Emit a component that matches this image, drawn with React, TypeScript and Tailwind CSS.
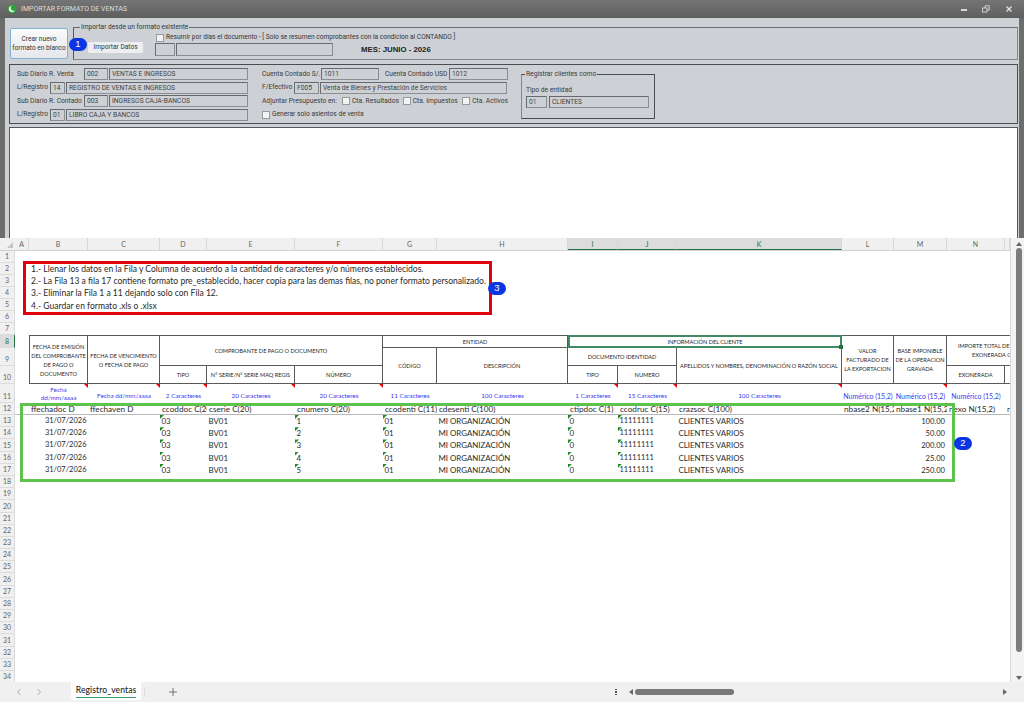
const COLS =
  "grid grid-cols-[14px_59px_72px_47px_88px_88px_54px_131px_50px_59px_165px_52px_53px_58px_5px]";
const CELL = "border-r border-b border-[#5a5a5a] flex items-center justify-center text-center px-px";

const ROWS: { n: number; h: string; on?: boolean }[] = [
  { n: 1, h: "h-[12px]" },
  { n: 2, h: "h-[12px]" },
  { n: 3, h: "h-[12px]" },
  { n: 4, h: "h-[12px]" },
  { n: 5, h: "h-[12px]" },
  { n: 6, h: "h-[12px]" },
  { n: 7, h: "h-[12px]" },
  { n: 8, h: "h-[12.5px]", on: true },
  { n: 9, h: "h-[18px]" },
  { n: 10, h: "h-[18.5px]" },
  { n: 11, h: "h-[19px]" },
  { n: 12, h: "h-[12px]" },
  ...Array.from({ length: 22 }, (_, i) => ({ n: 13 + i, h: "h-[12.2px]" })),
];

const LETTERS = [
  { l: "A", w: "w-[14px]" },
  { l: "B", w: "w-[59px]" },
  { l: "C", w: "w-[72px]" },
  { l: "D", w: "w-[47px]" },
  { l: "E", w: "w-[88px]" },
  { l: "F", w: "w-[88px]" },
  { l: "G", w: "w-[54px]" },
  { l: "H", w: "w-[131px]" },
  { l: "I", w: "w-[50px]", on: true },
  { l: "J", w: "w-[59px]", on: true },
  { l: "K", w: "w-[165px]", on: true },
  { l: "L", w: "w-[52px]" },
  { l: "M", w: "w-[53px]" },
  { l: "N", w: "w-[58px]" },
  { l: "", w: "w-[5px]" },
];

const INSTRUCTIONS = [
  "1.- Llenar los datos en la Fila y Columna de acuerdo a la cantidad de caracteres y/o números establecidos.",
  "2.- La Fila 13 a fila 17 contiene formato pre_establecido, hacer copia para las demas filas, no poner formato personalizado.",
  "3.- Eliminar la Fila 1 a 11 dejando solo con Fila 12.",
  "4.- Guardar en formato .xls o .xlsx",
];

const LIMITS = [
  { t: "Fecha dd/mm/aaaa", mark: true },
  { t: "Fecha dd/mm/aaaa", mark: true },
  { t: "2 Caracteres", mark: true },
  { t: "20 Caracteres", mark: true },
  { t: "20 Caracteres", mark: true },
  { t: "11 Caracteres" },
  { t: "100 Caracteres" },
  { t: "1 Caracteres", mark: true },
  { t: "15 Caracteres", mark: true },
  { t: "100 Caracteres", mark: true },
  { t: "Numérico (15,2)" },
  { t: "Numérico (15,2)", mark: true },
  { t: "Numérico (15,2)" },
];

const FIELDS = [
  "ffechadoc D",
  "ffechaven D",
  "ccoddoc C(20)",
  "cserie C(20)",
  "cnumero C(20)",
  "ccodenti C(11)",
  "cdesenti C(100)",
  "ctipdoc C(1)",
  "ccodruc C(15)",
  "crazsoc C(100)",
  "nbase2 N(15,2)",
  "nbase1 N(15,2)",
  "nexo N(15,2)",
  "n",
];

const DATA = [
  { num: "1", total: "100.00" },
  { num: "2", total: "50.00" },
  { num: "3", total: "200.00" },
  { num: "4", total: "25.00" },
  { num: "5", total: "250.00" },
];

function Field({ text, className }: { text?: string; className: string }) {
  return (
    <div
      className={`h-[12px] shrink-0 border border-[#666a6e] border-r-[#8a8e92] border-b-[#8a8e92] pl-[2px] text-[6.7px] leading-[10px] text-[#444] whitespace-nowrap overflow-hidden ${className}`}
    >
      {text}
    </div>
  );
}

function Check({ label, className = "" }: { label: string; className?: string }) {
  return (
    <div className={`flex items-center gap-[2px] ${className}`}>
      <div className="w-[8px] h-[8px] bg-[#f2f3f4] border border-[#9a9a9a] shrink-0" />
      <span className="whitespace-nowrap">{label}</span>
    </div>
  );
}

function Badge({ n, className }: { n: number; className: string }) {
  return (
    <div
      className={`absolute w-[18px] h-[12.5px] rounded-full bg-[#0a35e2] text-white text-[9.5px] leading-[12.5px] text-center font-['Liberation_Sans',sans-serif] ${className}`}
    >
      {n}
    </div>
  );
}

function Flag() {
  return <div className="absolute top-0 right-0 w-[4px] h-[4px] bg-[#e8000b] [clip-path:polygon(0_0,100%_0,100%_100%)]" />;
}

function Tick() {
  return <div className="absolute top-0 left-0 w-[4px] h-[4px] bg-[#1c8a2c] [clip-path:polygon(0_0,100%_0,0_100%)]" />;
}

function TitleBar() {
  return (
    <div className="h-[18px] shrink-0 flex items-center bg-gradient-to-b from-[#757575] to-[#5f5f5f] pl-[7px] pr-[11px]">
      <svg width="10" height="10" viewBox="0 0 10 10" className="shrink-0">
        <circle cx="5" cy="5" r="4.6" fill="#2f9e3f" />
        <path d="M5 1.8a3.2 3.2 0 1 0 3 4.4 2.6 2.6 0 0 1-3-4.4z" fill="#e8f0e8" />
      </svg>
      <span className="ml-[4px] text-[7px] text-[#dcdcdc]">IMPORTAR FORMATO DE VENTAS</span>
      <div className="ml-auto flex items-center gap-[15px] text-[#d8d8d8]">
        <div className="w-[6px] h-[1.5px] bg-[#d8d8d8] mt-[2px]" />
        <svg width="8" height="8" viewBox="0 0 8 8" fill="none" stroke="#cfcfcf" strokeWidth="1">
          <rect x="0.5" y="3" width="4.5" height="4" />
          <path d="M3 3V0.8h4.3V5H5" />
        </svg>
        <svg width="8" height="8" viewBox="0 0 8 8" fill="none" stroke="#e0e0e0" strokeWidth="1.4">
          <path d="M1.5 1.5l5 5M6.5 1.5l-5 5" />
        </svg>
      </div>
    </div>
  );
}

function ImportPanel() {
  return (
    <div className="flex pl-[5px] pt-[4px] h-[42px] text-[6.6px] text-[#333]">
      <div className="mt-[6px] w-[58px] h-[31px] shrink-0 rounded-[2px] border border-[#7fb2d6] bg-gradient-to-b from-[#fbfbfb] to-[#e4e6ea] flex items-center justify-center text-center leading-[8.5px] whitespace-nowrap">
        <span>
          Crear nuevo
          <br />
          formato en blanco
        </span>
      </div>
      <fieldset className="ml-[5px] w-[945px] h-[38px] border border-[#55585b] border-t-[#6a6d70] border-b-[#85888b] border-r-[#85888b]">
        <legend className="ml-[6px] leading-[10px] px-px">Importar desde un formato existente</legend>
        <div className="flex items-start pl-[14px]">
          <div className="mt-[10px] w-[55px] h-[11px] bg-[#eceef1] rounded-[1px] text-center leading-[11px]">
            Importar Datos
          </div>
          <div className="ml-[12px] flex flex-col">
            <Check
              className="ml-px leading-[9px] mt-px"
              label="Resumir por días el documento - [ Solo se resumen comprobantes con la condicion al CONTANDO ]"
            />
            <div className="flex items-center mt-px">
              <Field className="w-[20px] !h-[13px]" />
              <Field className="ml-px w-[157px] !h-[13px]" />
              <span className="ml-[28px] text-[7.8px] font-bold text-[#222] font-['Liberation_Sans',sans-serif]">
                MES: JUNIO - 2026
              </span>
            </div>
          </div>
        </div>
      </fieldset>
    </div>
  );
}

function DiaryRow({ label, labelW, code, codeW, name }: { label: string; labelW: string; code: string; codeW: string; name: string }) {
  return (
    <div className="flex items-center gap-px">
      <span className={`shrink-0 whitespace-nowrap ${labelW}`}>{label}</span>
      <Field className={codeW} text={code} />
      <Field className="flex-1" text={name} />
    </div>
  );
}

function ConfigPanel() {
  return (
    <div className="mt-[4px] h-[60px] border border-[#4a4d50] flex text-[6.7px] text-[#3a3a3a]">
      <div className="ml-[7px] mt-[3px] w-[231px] flex flex-col gap-[1.5px]">
        <DiaryRow label="Sub Diario R. Venta" labelW="w-[66px]" code="002" codeW="w-[24px]" name="VENTAS E INGRESOS" />
        <DiaryRow label="L/Registro" labelW="w-[32px]" code="14" codeW="w-[15px]" name="REGISTRO DE VENTAS E INGRESOS" />
        <DiaryRow label="Sub Diario R. Contado" labelW="w-[66px]" code="003" codeW="w-[24px]" name="INGRESOS CAJA-BANCOS" />
        <DiaryRow label="L/Registro" labelW="w-[32px]" code="01" codeW="w-[15px]" name="LIBRO CAJA Y BANCOS" />
      </div>
      <div className="ml-[14px] mt-[3px] w-[246px] flex flex-col gap-[1.5px]">
        <div className="flex items-center">
          <span className="w-[59px] shrink-0 whitespace-nowrap">Cuenta Contado S/.</span>
          <Field className="w-[58px]" text="1011" />
          <span className="ml-[6px] w-[64px] shrink-0 whitespace-nowrap">Cuenta Contado USD</span>
          <Field className="w-[59px]" text="1012" />
        </div>
        <div className="flex items-center">
          <span className="w-[32px] shrink-0">F/Efectivo</span>
          <Field className="w-[25px]" text="F005" />
          <Field className="ml-px w-[187px]" text="Venta de Bienes y Prestación de Servicios" />
        </div>
        <div className="flex items-center h-[12px]">
          <span className="w-[80px] shrink-0 whitespace-nowrap">Adjuntar Presupuesto en:</span>
          <Check className="w-[61px]" label="Cta. Resultados" />
          <Check className="w-[60px]" label="Cta. Impuestos" />
          <Check label="Cta. Activos" />
        </div>
        <Check className="h-[12px]" label="Generar solo asientos de venta" />
      </div>
      <fieldset className="ml-[13px] mt-[4.5px] w-[134px] h-[49px] border border-[#4a4d50] border-l-[#85888b]">
        <legend className="ml-[3px] px-px leading-[9px]">Registrar clientes como</legend>
        <div className="pl-[4px]">
          <div className="mt-[7px] leading-[9px]">Tipo de entidad</div>
          <div className="mt-[1.5px] flex gap-[2px]">
            <Field className="w-[21px]" text="01" />
            <Field className="w-[100px]" text="CLIENTES" />
          </div>
        </div>
      </fieldset>
    </div>
  );
}

function HeaderTable() {
  return (
    <div className={`${COLS} grid-rows-[12.5px_18px_18.5px] text-[5.6px] leading-[9px] text-[#262626]`}>
      <div className={`${CELL} col-start-2 row-span-3 border-t border-l`}>
        FECHA DE EMISIÓN DEL COMPROBANTE DE PAGO O DOCUMENTO
      </div>
      <div className={`${CELL} col-start-3 row-span-3 border-t`}>FECHA DE VENCIMIENTO O FECHA DE PAGO</div>
      <div className={`${CELL} col-start-4 col-span-3 row-span-2 border-t`}>COMPROBANTE DE PAGO O DOCUMENTO</div>
      <div className={`${CELL} col-start-7 col-span-2 border-t`}>ENTIDAD</div>
      <div className="col-start-9 col-span-3 relative border-2 border-[#3f8a63] flex items-center justify-center">
        INFORMACIÓN DEL CLIENTE
        <div className="absolute -right-[3px] -bottom-[3px] w-[4px] h-[4px] bg-[#217346]" />
      </div>
      <div className={`${CELL} col-start-12 row-span-3 border-t`}>VALOR FACTURADO DE LA EXPORTACION</div>
      <div className={`${CELL} col-start-13 row-span-3 border-t`}>BASE IMPONIBLE DE LA OPERACION GRAVADA</div>
      <div className={`${CELL} col-start-14 col-span-2 row-span-2 border-t !border-r-0 overflow-hidden whitespace-nowrap !justify-start !text-left`}>
        <span className="pl-[10px]">
          IMPORTE TOTAL DE
          <br />
          <span className="pl-[14px]">EXONERADA O</span>
        </span>
      </div>
      <div className={`${CELL} col-start-7 row-span-2`}>CÓDIGO</div>
      <div className={`${CELL} col-start-8 row-span-2`}>DESCRIPCIÓN</div>
      <div className={`${CELL} col-start-9 col-span-2`}>DOCUMENTO IDENTIDAD</div>
      <div className={`${CELL} col-start-11 row-span-2`}>APELLIDOS Y NOMBRES, DENOMINACIÓN O RAZÓN SOCIAL</div>
      <div className={`${CELL} col-start-4`}>TIPO</div>
      <div className={`${CELL} col-start-5 whitespace-nowrap`}>N° SERIE/N° SERIE MAQ REGIS</div>
      <div className={`${CELL} col-start-6`}>NÚMERO</div>
      <div className={`${CELL} col-start-9`}>TIPO</div>
      <div className={`${CELL} col-start-10`}>NUMERO</div>
      <div className={`${CELL} col-start-14`}>EXONERADA</div>
      <div className="border-b border-[#5a5a5a] col-start-15" />
    </div>
  );
}

function Sheet() {
  return (
    <div className="relative flex-1 flex flex-col bg-white min-h-0 font-['Lato',sans-serif]">
      {/* column letters */}
      <div className="h-[13px] shrink-0 flex bg-[#f0f0f0] border-b border-[#d0d0d0] text-[7px] leading-[12px] text-[#666]">
        <div className="w-[15px] shrink-0 flex items-end justify-end pr-[2px] pb-[2px]">
          <div className="w-[6px] h-[6px] bg-[#c4c4c4] [clip-path:polygon(100%_0,100%_100%,0_100%)]" />
        </div>
        {LETTERS.map((c, i) => (
          <div
            key={i}
            className={`${c.w} shrink-0 text-center border-r border-[#d8d8d8] ${c.on ? "bg-[#dcdcdc] text-[#217346] border-b border-b-[#217346]" : ""}`}
          >
            {c.l}
          </div>
        ))}
      </div>

      <div className="flex flex-1 min-h-0">
        {/* row numbers */}
        <div className="w-[15px] shrink-0 flex flex-col bg-[#f0f0f0] text-[7px] leading-[11px] text-[#666] overflow-hidden">
          {ROWS.map((r) => (
            <div
              key={r.n}
              className={`${r.h} shrink-0 flex items-end justify-center border-b border-r border-[#dcdcdc] ${r.on ? "bg-[#dcdcdc] text-[#217346] border-r-[#217346]" : ""}`}
            >
              {r.n}
            </div>
          ))}
        </div>

        <div className="w-[995px] shrink-0 overflow-hidden">
          <div className="h-[84px] pt-[12px] pl-[16px] text-[8.55px] leading-[12.2px] text-[#2a2a2a]">
            {INSTRUCTIONS.map((t) => (
              <div key={t} className="whitespace-nowrap">
                {t}
              </div>
            ))}
          </div>

          <HeaderTable />

          {/* limits row */}
          <div className={`${COLS} h-[19px] text-[6.4px] leading-[8px] text-[#3b3bf0]`}>
            <div />
            {LIMITS.map((c, i) => (
              <div key={i} className="relative flex items-end justify-center text-center pb-px">
                {i === 0 ? (
                  <span className="px-[10px]">{c.t}</span>
                ) : (
                  <span className={`whitespace-nowrap pb-[2px] ${c.t.startsWith("Num") ? "text-[7px]" : ""}`}>{c.t}</span>
                )}
                {c.mark ? <Flag /> : null}
              </div>
            ))}
          </div>

          {/* field names */}
          <div className={`${COLS} h-[12px] border-b border-[#b8b8b8] text-[8.2px] leading-[12px] text-[#2a2a2a]`}>
            <div />
            {FIELDS.map((t, i) => (
              <div key={i} className="pl-[2px] whitespace-nowrap overflow-hidden">
                {t}
              </div>
            ))}
          </div>

          {DATA.map((d) => (
            <div key={d.num} className={`${COLS} h-[12.2px] text-[7.9px] leading-[12.2px] text-[#2a2a2a]`}>
              <div />
              <div className="text-right pr-[1.5px] text-[7.5px]">31/07/2026</div>
              <div />
              <div className="relative pl-[1.5px]">
                <Tick />
                03
              </div>
              <div className="pl-[1.5px]">BV01</div>
              <div className="relative pl-[1.5px]">
                <Tick />
                {d.num}
              </div>
              <div className="relative pl-[1.5px]">
                <Tick />
                01
              </div>
              <div className="pl-[1.5px] whitespace-nowrap">MI ORGANIZACIÓN</div>
              <div className="relative pl-[1.5px]">
                <Tick />0
              </div>
              <div className="relative pl-[1.5px] text-[7.4px]">
                <Tick />
                11111111
              </div>
              <div className="pl-[1.5px] whitespace-nowrap">CLIENTES VARIOS</div>
              <div />
              <div className="text-right pr-[2px] text-[7.6px]">{d.total}</div>
            </div>
          ))}
        </div>

        {/* vertical scrollbar */}
        <div className="w-[14px] shrink-0 bg-[#f3f3f3] border-l border-[#d8d8d8] flex flex-col items-center relative -mt-[13px]">
          <svg width="6" height="4" viewBox="0 0 6 4" className="mt-[4px] ml-[3px]">
            <polygon points="3,0 6,4 0,4" fill="#666" />
          </svg>
          <div className="mt-[2px] ml-[3px] w-[6px] h-[404px] rounded-full bg-[#7d7d7d]" />
          <svg width="6" height="4" viewBox="0 0 6 4" className="mt-[24px] ml-[3px]">
            <polygon points="0,0 6,0 3,4" fill="#666" />
          </svg>
        </div>
      </div>

      {/* sheet tabs */}
      <div className="h-[20px] shrink-0 flex items-center bg-[#f0f0f0] text-[#999]">
        <svg width="6" height="8" viewBox="0 0 6 8" fill="none" stroke="#aaa" className="ml-[16px]">
          <path d="M4.5 1L1.5 4l3 3" />
        </svg>
        <svg width="6" height="8" viewBox="0 0 6 8" fill="none" stroke="#aaa" className="ml-[14px]">
          <path d="M1.5 1l3 3-3 3" />
        </svg>
        <div className="ml-[29px] w-[70px] h-[18px] self-start bg-white rounded-b-[3px] flex flex-col items-center justify-center">
          <span className="text-[8.5px] leading-[12px] font-medium text-[#222] tracking-[0.1px]">Registro_ventas</span>
          <div className="w-[60px] h-[1.5px] bg-[#3e9a6b] mt-[1px]" />
        </div>
        <div className="ml-[3px] w-px h-[10px] bg-[#dcdcdc]" />
        <svg width="8" height="8" viewBox="0 0 8 8" stroke="#777" className="ml-[24px]">
          <path d="M4 0v8M0 4h8" />
        </svg>
        <div className="ml-[438px] flex flex-col gap-px">
          <div className="w-[1.5px] h-[1.5px] bg-[#555]" />
          <div className="w-[1.5px] h-[1.5px] bg-[#555]" />
          <div className="w-[1.5px] h-[1.5px] bg-[#555]" />
        </div>
        <svg width="4" height="6" viewBox="0 0 4 6" className="ml-[12px]">
          <polygon points="4,0 4,6 0,3" fill="#666" />
        </svg>
        <div className="ml-[2px] w-[99px] h-[6px] rounded-full bg-[#787878]" />
        <svg width="4" height="6" viewBox="0 0 4 6" className="ml-[269px]">
          <polygon points="0,0 4,3 0,6" fill="#666" />
        </svg>
      </div>

      {/* annotations over the sheet */}
      <div className="absolute left-[23px] top-[23px] w-[469px] h-[54px] border-[3px] border-[#e6000e] pointer-events-none" />
      <div className="absolute left-[20px] top-[165px] w-[935px] h-[79px] border-[3px] border-[#5ec34c] pointer-events-none" />
      <Badge n={3} className="left-[488px] top-[44px]" />
      <Badge n={2} className="left-[954px] top-[199px]" />
    </div>
  );
}

export default function App() {
  return (
    <div className="relative w-[1024px] h-[702px] overflow-hidden flex flex-col bg-[#6d6d6d] font-['Roboto',sans-serif]">
      <TitleBar />
      <div className="shrink-0 mx-[5px] w-[1014px] h-[220px] bg-[#cdd1d6] pl-[4px] pr-px">
        <div className="-ml-[4px]">
          <ImportPanel />
        </div>
        <ConfigPanel />
        <div className="mt-[3px] h-[111px] bg-white border border-b-0 border-[#55585b]" />
      </div>
      <Sheet />
      <Badge n={1} className="left-[69px] top-[38px]" />
    </div>
  );
}
